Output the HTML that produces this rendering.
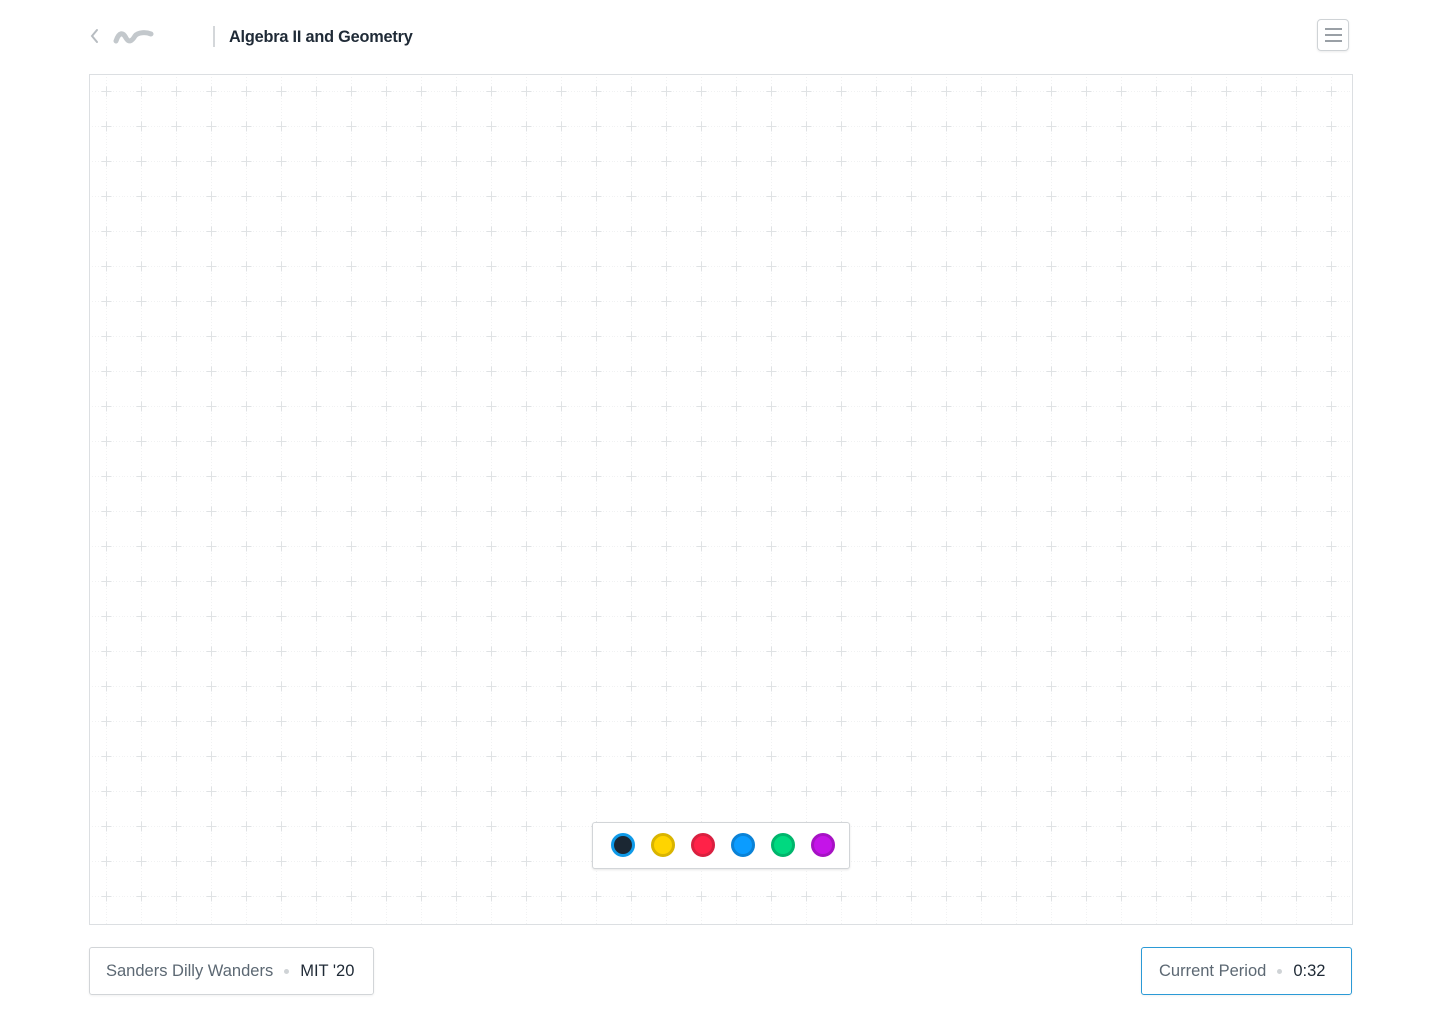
<!DOCTYPE html>
<html><head><meta charset="utf-8"><style>
*{box-sizing:border-box;margin:0;padding:0}
body{width:1440px;height:1024px;background:#fff;font-family:"Liberation Sans",sans-serif;position:relative;overflow:hidden}
.abs{position:absolute}
.title{left:229px;top:28px;font-size:16.3px;font-weight:bold;color:#1f2a36;letter-spacing:-0.2px}
.sep{left:213px;top:26px;width:2px;height:21px;background:#d4d7da}
.menu{left:1317px;top:19px;width:32px;height:32px;border:1px solid #cfd3d6;border-radius:4px;box-shadow:0 1px 2px rgba(0,0,0,.08)}
.menu i{position:absolute;left:7px;width:17px;height:2px;background:#9aa0a6}
.canvas{left:89px;top:74px;width:1264px;height:851px;border:1px solid #dcdfe2}
.palette{left:592px;top:822px;width:258px;height:47px;background:#fff;border:1px solid #d2d5d8;border-radius:3px;box-shadow:0 1px 2px rgba(0,0,0,.1)}
.dot{position:absolute;top:10px;width:24px;height:24px;border-radius:50%}
.box{top:947px;height:48px;border:1px solid #d2d5d8;border-radius:3px;font-size:16.5px;line-height:47px;color:#5c6873;padding-left:16px;box-shadow:0 1px 2px rgba(0,0,0,.06)}
.box b{font-weight:normal;color:#1f2a36}
.box .m{display:inline-block;width:5px;height:5px;border-radius:50%;background:#cfd3d6;vertical-align:middle;margin:0 11px 0 11px}
</style></head><body>
<svg class="abs" style="left:88px;top:27px" width="70" height="20" viewBox="0 0 70 20">
<path d="M9 3 L4 9 L9 15" fill="none" stroke="#b7bcc1" stroke-width="2" stroke-linecap="round"/>
<path d="M28 14 C31 5 35 5 38 11 C41 16 44 14 47 9 C50 5 58 5 63 7" fill="none" stroke="#c3c8cc" stroke-width="5" stroke-linecap="round"/>
</svg>
<div class="abs sep"></div>
<div class="abs title">Algebra II and Geometry</div>
<div class="abs menu"><i style="top:8px"></i><i style="top:14px"></i><i style="top:20px"></i></div>
<div class="abs canvas">
<svg width="1262" height="849">
<defs><pattern id="g" x="-1" y="-1" width="35" height="35" patternUnits="userSpaceOnUse">
<path d="M17.5 0V35M0 17.5H35" stroke="#f1f2f3" stroke-width="1" stroke-dasharray="1 2"/>
<path d="M17.5 12.5V22.5M12.5 17.5H22.5" stroke="#dfe2e4" stroke-width="1"/>
</pattern></defs>
<rect width="1262" height="849" fill="url(#g)"/>
</svg>
</div>
<div class="abs palette">
<div class="dot" style="left:18px;background:#1b2733;border:3px solid #0f9ae8"></div>
<div class="dot" style="left:58px;background:#ffd400;border:3px solid #d9b400"></div>
<div class="dot" style="left:98px;background:#ff2248;border:3px solid #d9203f"></div>
<div class="dot" style="left:138px;background:#0b9cff;border:3px solid #0a82d6"></div>
<div class="dot" style="left:178px;background:#00d980;border:3px solid #00b56c"></div>
<div class="dot" style="left:218px;background:#c414e8;border:3px solid #a612c4"></div>
</div>
<div class="abs box" style="left:89px;width:285px">Sanders Dilly Wanders<span class="m"></span><b>MIT '20</b></div>
<div class="abs box" style="left:1141px;width:211px;border-color:#2b9ad6;padding-left:17px">Current Period<span class="m"></span><b>0:32</b></div>
</body></html>
